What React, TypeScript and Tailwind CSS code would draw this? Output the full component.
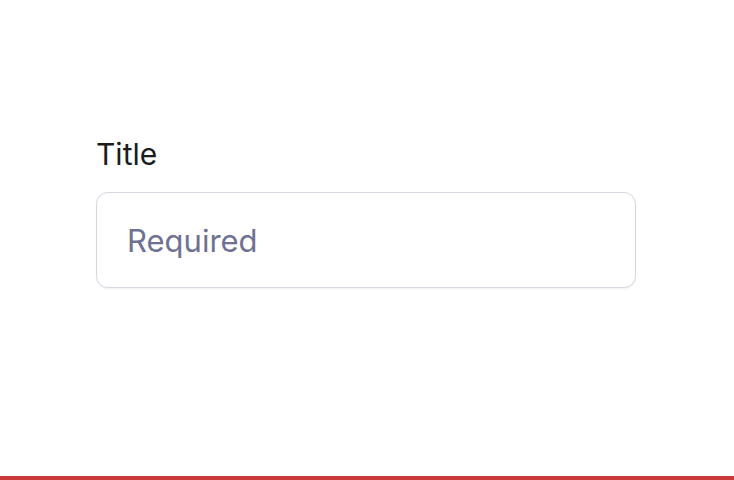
export default function App() {
  return (
    <div className="h-[480px] flex flex-col bg-white text-[#1a1a1a]" style={{ fontFamily: 'Inter, "Noto Sans", sans-serif' }}>
      <main className="flex-1 px-[96px] pt-[136px]">
        <label htmlFor="title" className="block text-[30px] leading-[36px] text-[#1c1c1c]">
          Title
        </label>
        <input
          id="title"
          type="text"
          placeholder="Required"
          className="mt-[20px] block w-[540px] h-[96px] rounded-[12px] border border-[#d7d6e0] bg-white px-[30px] text-[31px] text-[#1c1c1c] placeholder:text-[#6e7191] shadow-[0_1px_2px_rgba(20,20,40,0.06)] outline-none"
        />
      </main>
      <div className="h-[4px] bg-[#c93a3a]" />
    </div>
  );
}
